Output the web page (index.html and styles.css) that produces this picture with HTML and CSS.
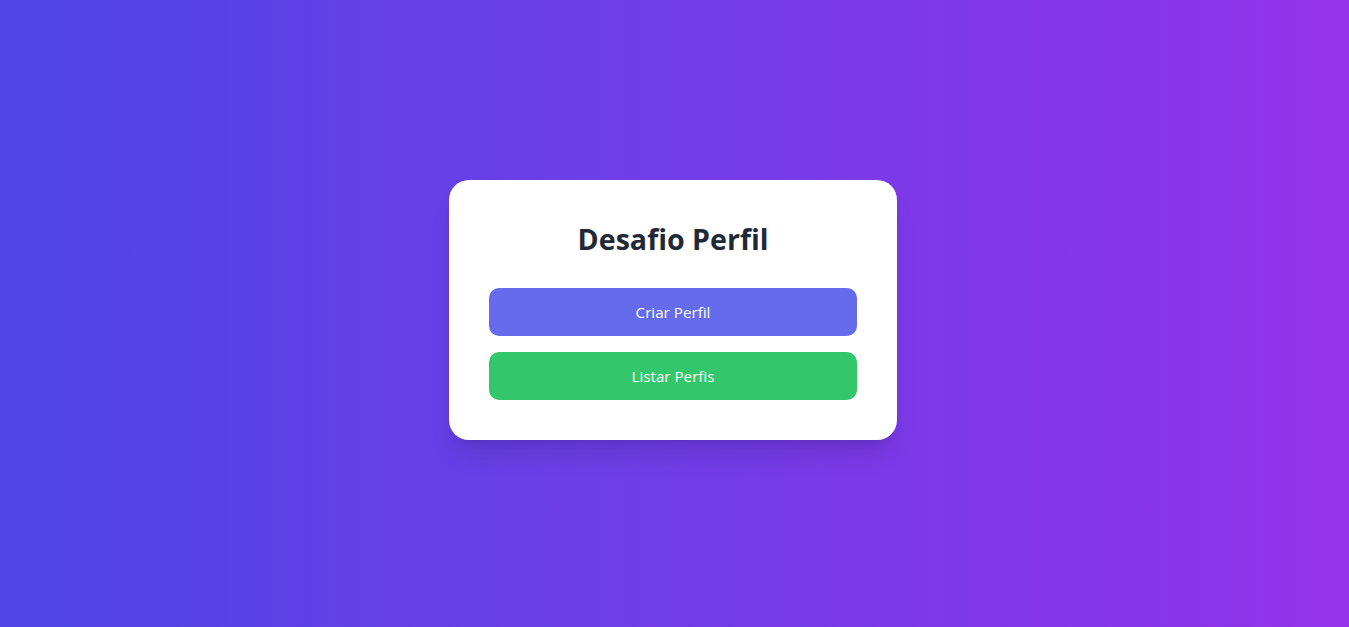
FILE: index.html
```html
<!DOCTYPE html>
<html lang="pt-BR">
<head>
<meta charset="utf-8">
<title>Desafio Perfil</title>
<link rel="stylesheet" href="styles.css">
</head>
<body>
  <main class="page">
    <section class="card">
      <h1 class="title">Desafio Perfil</h1>
      <div class="actions">
        <button class="btn btn-primary" type="button">Criar Perfil</button>
        <button class="btn btn-success" type="button">Listar Perfis</button>
      </div>
    </section>
  </main>
</body>
</html>
```

FILE: styles.css
```css
* { box-sizing: border-box; }
html, body { margin: 0; padding: 0; }
body {
  font-family: "Open Sans", "Noto Sans", sans-serif;
  background: linear-gradient(to right, #4f46e5, #9333ea);
  min-height: 100vh;
}
.page {
  min-height: 100vh;
  display: flex;
  align-items: center;
  justify-content: center;
  padding: 0 3px 7px 0;
}
.card {
  width: 448px;
  background: #ffffff;
  border-radius: 20px;
  padding: 40px;
  box-shadow: 0 20px 25px -5px rgba(0,0,0,0.1), 0 8px 10px -6px rgba(0,0,0,0.1);
}
.title {
  margin: 0 0 32px;
  text-align: center;
  font-size: 28.6px;
  line-height: 38px;
  font-weight: 700;
  color: #1f2937;
  height: 36px;
}
.actions {
  display: flex;
  flex-direction: column;
  gap: 16px;
}
.btn {
  display: block;
  width: 100%;
  border: 0;
  border-radius: 10px;
  padding: 12px 16px;
  font-family: inherit;
  font-size: 15.2px;
  line-height: 25px;
  height: 48px;
  color: #ffffff;
  cursor: pointer;
}
.btn-primary { background: #656cec; }
.btn-success { background: #34c66a; }
```
